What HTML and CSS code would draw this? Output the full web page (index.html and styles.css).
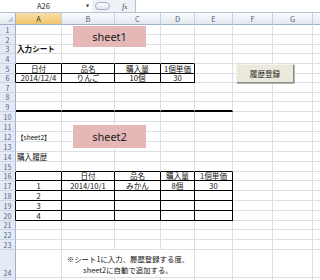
FILE: index.html
```html
<!DOCTYPE html>
<html lang="ja">
<head>
    <meta charset="UTF-8">
    <title>履歴登録</title>
    <link rel="stylesheet" href="styles.css">
</head>
<body>

    <div class="formula-bar">
        <div class="name-box"><span class="name-text">A26</span><span class="drop">▼</span></div>
        <div class="tools"><span class="knob"></span><span class="fx"><i>f</i><small>x</small></span></div>
        <div class="formula"></div>
    </div>

    <main class="sheet">
        <table class="grid">
            <colgroup>
                <col class="w-head">
                <col class="w-a">
                <col class="w-b">
                <col class="w-c">
                <col class="w-d">
                <col class="w-e">
                <col class="w-f">
                <col class="w-g">
                <col class="w-h">
            </colgroup>

            <tr class="col-heads">
                <th class="corner"><span class="tri"></span></th>
                <th class="sel">A</th><th>B</th><th>C</th><th>D</th><th>E</th><th>F</th><th>G</th><th></th>
            </tr>

            <tr><th>1</th><td></td><td></td><td></td><td></td><td></td><td></td><td></td><td></td></tr>
            <tr><th>2</th><td></td><td></td><td></td><td></td><td></td><td></td><td></td><td></td></tr>
            <tr class="h9"><th>3</th><td class="bold">入力シート</td><td></td><td></td><td></td><td></td><td></td><td></td><td></td></tr>
            <tr><th>4</th><td class="bt"></td><td class="bt"></td><td class="bt"></td><td class="bt"></td><td></td><td></td><td></td><td></td></tr>
            <tr><th class="edge">5</th><td class="bx c">日付</td><td class="bx c">品名</td><td class="bx c">購入量</td><td class="bx c">1個単価</td><td></td><td></td><td></td><td></td></tr>
            <tr class="h9"><th class="edge">6</th><td class="bx c">2014/12/4</td><td class="bx c">りんご</td><td class="bx c">10個</td><td class="bx c">30</td><td></td><td></td><td></td><td></td></tr>
            <tr><th>7</th><td></td><td></td><td></td><td></td><td></td><td></td><td></td><td></td></tr>
            <tr class="h9"><th>8</th><td></td><td></td><td></td><td></td><td></td><td></td><td></td><td></td></tr>
            <tr><th>9</th><td class="thick"></td><td class="thick"></td><td class="thick"></td><td class="thick"></td><td class="thick"></td><td></td><td></td><td></td></tr>
            <tr><th>10</th><td></td><td></td><td></td><td></td><td></td><td></td><td></td><td></td></tr>
            <tr><th>11</th><td></td><td></td><td></td><td></td><td></td><td></td><td></td><td></td></tr>
            <tr><th>12</th><td class="small">【sheet2】</td><td></td><td></td><td></td><td></td><td></td><td></td><td></td></tr>
            <tr><th>13</th><td></td><td></td><td></td><td></td><td></td><td></td><td></td><td></td></tr>
            <tr><th>14</th><td>購入履歴</td><td></td><td></td><td></td><td></td><td></td><td></td><td></td></tr>
            <tr><th>15</th><td class="bt"></td><td class="bt"></td><td class="bt"></td><td class="bt"></td><td class="bt"></td><td></td><td></td><td></td></tr>
            <tr class="h9"><th class="edge">16</th><td class="bx"></td><td class="bx c">日付</td><td class="bx c">品名</td><td class="bx c">購入量</td><td class="bx c">1個単価</td><td></td><td></td><td></td></tr>
            <tr><th class="edge">17</th><td class="bx c">1</td><td class="bx c">2014/10/1</td><td class="bx c">みかん</td><td class="bx c">8個</td><td class="bx c">30</td><td></td><td></td><td></td></tr>
            <tr><th class="edge">18</th><td class="bx c">2</td><td class="bx"></td><td class="bx"></td><td class="bx"></td><td class="bx"></td><td></td><td></td><td></td></tr>
            <tr><th class="edge">19</th><td class="bx c">3</td><td class="bx"></td><td class="bx"></td><td class="bx"></td><td class="bx"></td><td></td><td></td><td></td></tr>
            <tr><th class="edge">20</th><td class="bx c">4</td><td class="bx"></td><td class="bx"></td><td class="bx"></td><td class="bx"></td><td></td><td></td><td></td></tr>
            <tr class="h9"><th>21</th><td></td><td></td><td></td><td></td><td></td><td></td><td></td><td></td></tr>
            <tr><th>22</th><td></td><td></td><td></td><td></td><td></td><td></td><td></td><td></td></tr>
            <tr><th>23</th><td></td><td></td><td></td><td></td><td></td><td></td><td></td><td></td></tr>
            <tr class="tall"><th>24</th><td></td><td class="note" colspan="3">※シート1に入力、履歴登録する度、<br>sheet2に自動で追加する。</td><td></td><td></td><td></td><td></td></tr>
            <tr><th>25</th><td></td><td></td><td></td><td></td><td></td><td></td><td></td><td></td></tr>
        </table>

        <!--図形 -->
        <div class="shape pink sheet1">sheet1</div>
        <div class="shape pink sheet2">sheet2</div>
        <button class="shape btn">履歴登録</button>
    </main>

</body>
</html>
```

FILE: styles.css
```css
body {
    margin: 0;
    width: 320px;
    height: 280px;
    overflow: hidden;
    background-color: #fff;
    font-family: "Noto Sans CJK JP", "Noto Sans", sans-serif;
    color: #111;
}

/* formula bar */
.formula-bar {
    display: flex;
    height: 12px;
    background-color: #eef2f7;
    border-bottom: 1px solid #b6c3d3;
}

.name-box {
    width: 92px;
    flex: none;
    box-sizing: border-box;
    display: flex;
    align-items: center;
    padding-left: 37px;
    padding-right: 3px;
    background-color: #fff;
    font-size: 7.5px;
    line-height: 12px;
    color: #222;
}

.drop {
    margin-left: auto;
    font-family: "DejaVu Sans", sans-serif;
    font-size: 4px;
    color: #333;
}

.tools {
    width: 43px;
    flex: none;
    display: flex;
    align-items: center;
    gap: 12px;
    padding-left: 3px;
    box-sizing: border-box;
}

.knob {
    width: 15px;
    height: 8px;
    border: 1px solid #a3b0c0;
    border-radius: 5px;
    background: linear-gradient(#ffffff, #dfe5ec);
    box-sizing: border-box;
}

.fx {
    font-family: "Liberation Serif", serif;
    font-size: 8px;
    color: #444;
}

.fx small {
    font-size: 6px;
}

.formula {
    flex: 1;
    background-color: #fff;
    border-left: 1px solid #b6c3d3;
}

/* sheet */
.sheet {
    position: relative;
}

.grid {
    table-layout: fixed;
    border-collapse: separate;
    border-spacing: 0;
    width: 353px;
}

.w-head { width: 16px; }
.w-a { width: 46px; }
.w-b { width: 53px; }
.w-c { width: 46px; }
.w-d { width: 34px; }
.w-e { width: 38px; }
.w-f { width: 40px; }
.w-g { width: 40px; }
.w-h { width: 40px; }

.grid tr {
    height: 10px;
}

.grid tr.h9 {
    height: 9px;
}

.grid tr.tall {
    height: 28px;
}

.grid tr.col-heads {
    height: 12px;
}

.grid td,
.grid th {
    box-sizing: border-box;
    padding: 0;
    white-space: nowrap;
    font-size: 7.6px;
    line-height: 8px;
    font-weight: normal;
}

.grid td {
    padding: 0 1px;
    border-right: 1px solid #dcdfe4;
    border-bottom: 1px solid #dcdfe4;
    vertical-align: bottom;
    text-align: left;
}

.grid th {
    background-color: #e4ebf5;
    color: #4f6584;
    border-right: 1px solid #9fb2c9;
    border-bottom: 1px solid #c9d5e4;
    text-align: center;
    vertical-align: bottom;
    font-size: 7px;
}

.col-heads th {
    background: linear-gradient(#f9fafc, #e2e8f0);
    border-right: 1px solid #c7d1de;
    border-bottom: 1px solid #9fb2c9;
    vertical-align: middle;
    color: #51627a;
    font-size: 7.5px;
}

.col-heads th.sel {
    background: linear-gradient(#f9dfa6, #f1c56c);
    color: #333;
}

.col-heads th.corner {
    position: relative;
    border-right: 1px solid #9fb2c9;
}

.tri {
    position: absolute;
    right: 2px;
    bottom: 2px;
    border-left: 6px solid transparent;
    border-bottom: 6px solid #c3ccd8;
}

.grid th.edge {
    border-right-color: #000;
}

.grid td.c {
    text-align: center;
}

.grid td.bold {
    font-weight: bold;
}

.grid td.small {
    font-size: 6.6px;
}

.grid td.bt {
    border-bottom-color: #000;
}

.grid td.bx {
    border-right-color: #000;
    border-bottom-color: #000;
}

.grid td.thick {
    border-bottom: 2px solid #000;
}

.grid td.note {
    text-align: center;
    vertical-align: middle;
    line-height: 11px;
    font-size: 7.4px;
}

/* shapes on top of the sheet */
.shape {
    position: absolute;
    box-sizing: border-box;
}

.pink {
    left: 73px;
    width: 73px;
    background-color: #e5b8b7;
    display: flex;
    align-items: center;
    justify-content: center;
    font-family: "Noto Sans", sans-serif;
    font-size: 11px;
    color: #222;
}

.sheet1 {
    top: 13px;
    height: 21px;
}

.sheet2 {
    top: 112px;
    height: 23px;
}

.btn {
    left: 236px;
    top: 51px;
    width: 58px;
    height: 19px;
    padding: 0;
    background-color: #ebe8dc;
    border: 1px solid;
    border-color: #f6f4ee #8f8d86 #8f8d86 #f6f4ee;
    box-shadow: 1px 1px 0 #b8b6ae;
    font-family: "Noto Sans CJK JP", sans-serif;
    font-size: 7.6px;
    color: #222;
}
```
